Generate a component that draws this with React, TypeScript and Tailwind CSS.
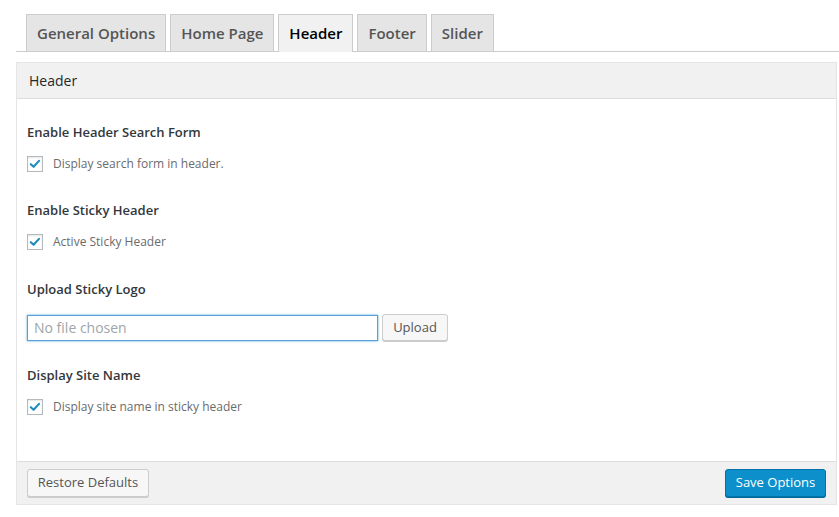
import React from 'react';

const tabs = ['General Options', 'Home Page', 'Header', 'Footer', 'Slider'];

function Check({ label }: { label: string }) {
  return (
    <label className="mt-[16px] flex h-[16px] items-center gap-[10px]">
      <span className="flex h-[16px] w-[16px] items-center justify-center border border-[#b4b9be] bg-white shadow-[inset_0_1px_2px_rgba(0,0,0,0.1)]">
        <svg viewBox="0 0 16 16" className="h-[14px] w-[14px]">
          <path d="M3.2 8.2 L6.4 11.2 L12.6 4.4" fill="none" stroke="#1e8cbe" strokeWidth="2.4" strokeLinecap="round" strokeLinejoin="round" />
        </svg>
      </span>
      <span className="text-[12px] leading-[16px] text-[#6b6b6b]">{label}</span>
    </label>
  );
}

function Heading({ children }: { children: React.ReactNode }) {
  return <h3 className="h-[16px] text-[13px] font-semibold leading-[16px] text-[#32373c]">{children}</h3>;
}

export default function App() {
  return (
    <div className="h-[517px] w-[839px] bg-white pt-[14px] font-['Open_Sans',sans-serif]">
      {/* Tabs */}
      <div className="ml-4 flex h-[38px] gap-[4px] border-b border-[#ccc] pl-[10px]">
        {tabs.map((t) => {
          const active = t === 'Header';
          return (
            <div
              key={t}
              className={
                active
                  ? 'relative -mb-px flex h-[38px] items-center border border-b-0 border-[#ccc] bg-[#f1f1f1] px-[10px] text-[15px] font-semibold text-black'
                  : 'flex h-[37px] items-center border border-b-0 border-[#ccc] bg-[#e5e5e5] px-[10px] text-[15px] font-semibold text-[#555]'
              }
            >
              {t}
            </div>
          );
        })}
      </div>

      {/* Panel */}
      <div className="ml-4 mt-[10px] w-[821px] border border-[#e5e5e5]">
        <div className="flex h-[36px] items-center border-b border-[#ddd] bg-[#f1f1f1] pl-[12px] text-[14px] text-[#23282d]">
          Header
        </div>

        <div className="h-[362px] px-[10px] pt-[25px]">
          <Heading>Enable Header Search Form</Heading>
          <Check label="Display search form in header." />

          <div className="mt-[30px]">
            <Heading>Enable Sticky Header</Heading>
            <Check label="Active Sticky Header" />
          </div>

          <div className="mt-[31px]">
            <Heading>Upload Sticky Logo</Heading>
            <div className="mt-[17px] flex items-center gap-[4px]">
              <input
                readOnly
                placeholder="No file chosen"
                className="h-[26px] w-[351px] border border-[#5b9dd9] bg-white px-[6px] text-[14px] text-[#333] shadow-[0_0_2px_rgba(30,140,190,0.8)] outline-none placeholder:text-[#a0a5aa]"
              />
              <button className="h-[27px] w-[66px] rounded-[3px] border border-[#ccc] bg-[#f7f7f7] text-[13px] text-[#555] shadow-[0_1px_0_#ccc]">
                Upload
              </button>
            </div>
          </div>

          <div className="mt-[26px]">
            <Heading>Display Site Name</Heading>
            <Check label="Display site name in sticky header" />
          </div>
        </div>

        <div className="flex h-[43px] items-start justify-between border-t border-[#ddd] bg-[#f1f1f1] px-[10px] pt-[7px]">
          <button className="h-[28px] w-[122px] rounded-[3px] border border-[#ccc] bg-[#f7f7f7] text-[13px] text-[#555] shadow-[0_1px_0_#ccc]">
            Restore Defaults
          </button>
          <button className="h-[28px] w-[101px] rounded-[3px] border border-[#0073aa] bg-[#0d8fcb] text-[13px] text-white shadow-[0_1px_0_#006799]">
            Save Options
          </button>
        </div>
      </div>
    </div>
  );
}
